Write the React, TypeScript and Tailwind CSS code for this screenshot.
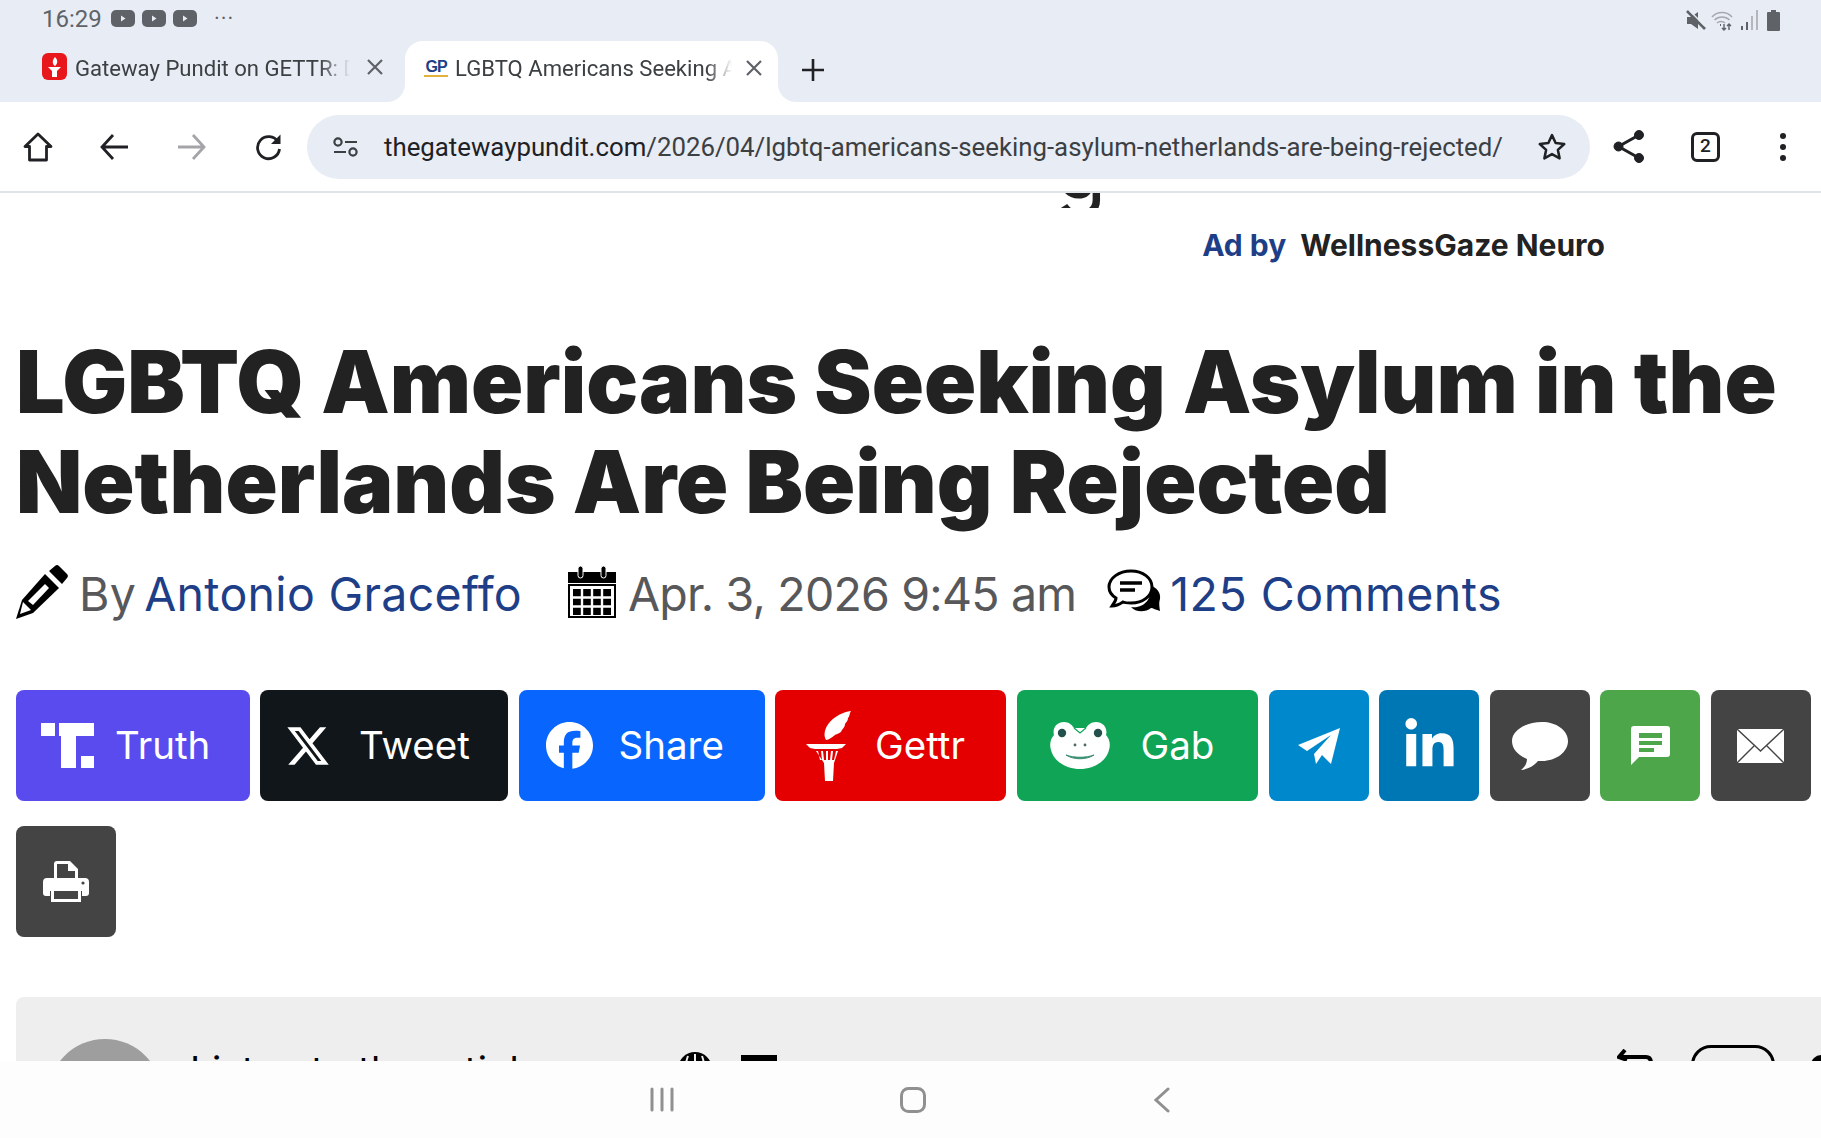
import { FaFacebook, FaLinkedinIn, FaXTwitter } from 'react-icons/fa6'

function YtIcon() {
  return (
    <svg width="24" height="17" viewBox="0 0 24 17">
      <rect width="24" height="17" rx="5" fill="#5f6368" />
      <path d="M10 5.5l4.5 3-4.5 3z" fill="#e8ecf5" />
    </svg>
  )
}

function StatusIcons() {
  return (
    <div className="flex items-center">
      <svg width="20" height="21" viewBox="0 0 20 21" fill="#5f6368">
        <path d="M1 7h4l7-5v17l-7-5H1z" />
        <path d="M1 1l18 18" stroke="#5f6368" strokeWidth="2.6" />
        <path d="M3 0l16 16" stroke="#e8ecf5" strokeWidth="1.4" />
      </svg>
      <svg width="22" height="21" viewBox="0 0 22 21" fill="none" stroke="#a5a8ad" strokeWidth="1.5" className="ml-[5px]">
        <path d="M1 7c5-6 15-6 20 0" />
        <path d="M3.5 10c4-4 11-4 15 0" />
        <path d="M6 13c2-2 6-2 8 0" />
        <path d="M9 15h1" stroke="#5f6368" strokeWidth="2" />
        <path d="M13 14v6M11 18l2 2 2-2M18 20v-6M16 16l2-2 2 2" stroke="#5f6368" strokeWidth="1.4" />
      </svg>
      <svg width="17" height="20" viewBox="0 0 17 20" className="ml-[8px]">
        <rect x="0" y="16" width="2" height="4" fill="#5f6368" />
        <rect x="5" y="12" width="2" height="8" fill="#5f6368" />
        <rect x="10" y="6" width="2" height="14" fill="#b3b6bb" />
        <rect x="15" y="0" width="2" height="20" fill="#b3b6bb" />
      </svg>
      <svg width="13" height="21" viewBox="0 0 13 21" className="ml-[9px]" fill="#5f6368">
        <path d="M4 0h5v2h3a1 1 0 0 1 1 1v17a1 1 0 0 1-1 1H1a1 1 0 0 1-1-1V3a1 1 0 0 1 1-1h3z" />
      </svg>
    </div>
  )
}

function CloseX() {
  return (
    <svg width="16" height="16" viewBox="0 0 16 16" stroke="#5f6368" strokeWidth="2.2" className="shrink-0">
      <path d="M1 1l14 14M15 1L1 15" />
    </svg>
  )
}

function TabStrip() {
  return (
    <div className="flex h-[61px] items-stretch">
      <div className="ml-[42px] mt-[12px] flex h-[27px] w-[341px] items-center">
        <svg width="25" height="27" viewBox="0 0 25 27" className="shrink-0">
          <rect width="25" height="27" rx="6" fill="#e8171c" />
          <path d="M13 4c3 3 3 6 0 9-3-2-3-6 0-9z" fill="#fff" />
          <path d="M6 14h13l-4 4v6h-5v-6z" fill="#fff" />
        </svg>
        <span className="ml-[8px] mt-[2px] w-[278px] overflow-hidden whitespace-nowrap font-[Roboto] text-[22.1px] leading-[30px] text-[#3c4043] [mask-image:linear-gradient(to_right,black_88%,transparent_99%)]">
          Gateway Pundit on GETTR: Dan
        </span>
        <span className="ml-[14px]">
          <CloseX />
        </span>
      </div>
      <div className="relative ml-[22px] flex w-[373px] items-center rounded-t-[18px] bg-white pb-[8px] pl-[19px]">
        <div className="absolute bottom-0 left-[-18px] h-[18px] w-[18px] bg-white">
          <div className="h-full w-full rounded-br-[18px] bg-[#e8ecf5]" />
        </div>
        <div className="absolute bottom-0 right-[-18px] h-[18px] w-[18px] bg-white">
          <div className="h-full w-full rounded-bl-[18px] bg-[#e8ecf5]" />
        </div>
        <span className="flex w-[24px] shrink-0 flex-col items-center border-b-2 border-[#e3b23c] font-['Liberation_Sans'] text-[16px] leading-[17px] font-bold tracking-[-1px] text-[#1e3f87]">
          GP
        </span>
        <span className="ml-[7px] w-[280px] overflow-hidden whitespace-nowrap font-[Roboto] text-[22.1px] leading-[30px] text-[#3c4043] [mask-image:linear-gradient(to_right,black_90%,transparent_99%)]">
          LGBTQ Americans Seeking Asylum
        </span>
        <span className="ml-[11px]">
          <CloseX />
        </span>
      </div>
      <svg width="22" height="22" viewBox="0 0 22 22" stroke="#202124" strokeWidth="2.6" className="ml-[24px] mt-[18px]">
        <path d="M11 0v22M0 11h22" />
      </svg>
    </div>
  )
}

function Toolbar() {
  return (
    <div className="flex h-[91px] items-center border-b-2 border-[#dfe3ea] bg-white">
      <div className="flex w-[307px] shrink-0 items-center pl-[23px]">
        <svg width="30" height="30" viewBox="0 0 30 30" fill="none" stroke="#202124" strokeWidth="2.8" strokeLinejoin="round">
          <path d="M15 2L2 14.5h4.5V28h17V14.5H28z" />
        </svg>
        <svg width="28" height="26" viewBox="0 0 28 26" fill="none" stroke="#202124" strokeWidth="2.8" className="ml-[47px]">
          <path d="M13 1L2 13l11 12M2 13h26" />
        </svg>
        <svg width="28" height="26" viewBox="0 0 28 26" fill="none" stroke="#a3a5a8" strokeWidth="2.8" className="ml-[50px]">
          <path d="M15 1l11 12-11 12M26 13H0" />
        </svg>
        <svg width="28" height="28" viewBox="0 0 28 28" fill="none" className="ml-[48px]">
          <path d="M24 9a11 11 0 1 0 1.5 7" stroke="#202124" strokeWidth="2.8" />
          <path d="M26.5 1.5V11h-9.5z" fill="#202124" />
        </svg>
      </div>
      <div className="flex h-[64px] w-[1283px] shrink-0 items-center rounded-full bg-[#e8ecf5] pl-[26px]">
        <svg width="25" height="20" viewBox="0 0 25 20" fill="none" stroke="#3c4043" strokeWidth="2.2" className="shrink-0">
          <circle cx="5" cy="5" r="3.6" />
          <path d="M12 5h12M1 15h12" />
          <circle cx="20" cy="15" r="3.6" />
        </svg>
        <span className="ml-[26px] mt-[2px] font-[Roboto] text-[25.8px] whitespace-nowrap text-[#3c4043]">
          <span className="text-[#202124]">thegatewaypundit.com</span>/2026/04/lgbtq-americans-seeking-asylum-netherlands-are-being-rejected/
        </span>
        <svg width="30" height="30" viewBox="0 0 24 24" fill="none" stroke="#202124" strokeWidth="2" strokeLinejoin="round" className="ml-[34px] shrink-0">
          <path d="M12 2.5l2.9 6.3 6.9.8-5.1 4.7 1.4 6.8-6.1-3.4-6.1 3.4 1.4-6.8-5.1-4.7 6.9-.8z" />
        </svg>
      </div>
      <svg width="32" height="33" viewBox="0 0 32 33" fill="#202124" stroke="#202124" className="ml-[23px] shrink-0">
        <circle cx="26" cy="5" r="4.5" />
        <circle cx="5.5" cy="16.5" r="4.5" />
        <circle cx="26" cy="28" r="4.5" />
        <path d="M26 5L5.5 16.5 26 28" fill="none" strokeWidth="3" />
      </svg>
      <span className="ml-[46px] flex h-[30px] w-[29px] shrink-0 items-center justify-center rounded-[6px] border-[3px] border-[#202124] font-[Roboto] text-[19px] font-medium text-[#202124]">
        2
      </span>
      <span className="ml-[60px] flex shrink-0 flex-col gap-[5px]">
        <span className="h-[6px] w-[6px] rounded-full bg-[#202124]" />
        <span className="h-[6px] w-[6px] rounded-full bg-[#202124]" />
        <span className="h-[6px] w-[6px] rounded-full bg-[#202124]" />
      </span>
    </div>
  )
}

function MetaRow() {
  return (
    <div className="mt-[35px] flex h-[56px] items-center whitespace-nowrap font-[Inter] text-[46.5px] tracking-[0.3px] text-[#58585a]">
      <svg width="54" height="54" viewBox="0 0 54 54" className="-ml-[2px] -mt-[6px] shrink-0">
        <path d="M41 1a3 3 0 0 1 4 0l8 8a3 3 0 0 1 0 4l-5 6-13-13z" fill="#000" />
        <path d="M31 9l14 14-26 25-17 6 6-19z" fill="#000" />
        <path d="M31 19l4 4-16 17-5-4z" fill="#fff" />
        <path d="M9 37l8 8-11 4z" fill="#fff" />
      </svg>
      <span className="ml-[11px]">By</span>
      <span className="ml-[8px] text-[#1e3f87]">Antonio Graceffo</span>
      <svg width="48" height="52" viewBox="0 0 48 52" className="-mt-[6px] ml-[46px] shrink-0">
        <rect x="0" y="6" width="48" height="11" fill="#000" />
        <rect x="10" y="0" width="5" height="12" rx="2.5" fill="#000" stroke="#fff" strokeWidth="1" />
        <rect x="33" y="0" width="5" height="12" rx="2.5" fill="#000" stroke="#fff" strokeWidth="1" />
        <rect x="1" y="19" width="46" height="32" fill="#fff" stroke="#000" strokeWidth="2" />
        <path d="M5 23h38v26H5z" fill="#000" />
        <path d="M14 23v26M24 23v26M34 23v26M5 31.5h38M5 40.5h38" stroke="#fff" strokeWidth="2.4" />
      </svg>
      <span className="ml-[12px] tracking-[-0.8px]">Apr. 3, 2026 9:45 am</span>
      <svg width="54" height="46" viewBox="0 0 54 46" className="-mt-[6px] ml-[31px] shrink-0">
        <path d="M42 16c8 2 12 8 11 14-1 3-1 6 0 12-4-1-7-3-9-3-6 5-16 4-20-1 12 2 23-8 18-22z" fill="#000" />
        <path d="M24 2c12 0 21 7 21 16s-9 16-21 16c-3 0-6 0-8-1-3 2-6 4-11 4 2-3 4-5 4-8-5-3-7-7-7-11C2 9 12 2 24 2z" fill="#fff" stroke="#000" strokeWidth="3" />
        <path d="M13 14h22M13 21h15" stroke="#000" strokeWidth="3.4" />
      </svg>
      <span className="ml-[9px] tracking-[0.5px] text-[#1e3f87]">125 Comments</span>
    </div>
  )
}

function GettrIcon() {
  return (
    <svg width="46" height="70" viewBox="0 0 46 70" fill="#fff" className="shrink-0">
      <path d="M45 0c-2 3-1 5-3 7 0 3-2 4-3 6 0 3-2 4-3 6-1 3-5 4-7 5-3 2-6 5-9 5-3-5-1-12 3-17C29 5 37 1 45 0z" />
      <path d="M0 33h40l-4 4-5 1H9l-5-1z" />
      <path d="M10 40h2l2 9h2l-1-9h2l1 9h2v-9h2v9h2l1-9h2l-1 9h2l2-9h2l-4 12-1 18h-8l-1-18z" />
    </svg>
  )
}

function GabIcon() {
  return (
    <svg width="62" height="47" viewBox="0 0 62 47" className="shrink-0">
      <path d="M2 28C0 22 2 16 5 13 3 6 8 0 15 0c5 0 8 3 10 6h12c2-3 5-6 10-6 7 0 12 6 10 13 3 3 5 9 3 15-3 12-16 19-29 19S5 40 2 28z" fill="#fff" />
      <path d="M25 6l6 5 6-5" fill="none" stroke="#0fa456" strokeWidth="1.2" />
      <circle cx="13" cy="11" r="4.2" fill="#23504a" />
      <circle cx="49" cy="11" r="4.2" fill="#23504a" />
      <circle cx="26" cy="23" r="1.4" fill="#4a6a62" />
      <circle cx="36" cy="23" r="1.4" fill="#4a6a62" />
      <path d="M17 33c8 5 20 5 28 0-8 3-20 3-28 0z" fill="#3b8f71" stroke="#3b8f71" />
    </svg>
  )
}

const shareButtons = [
  { label: 'Truth', width: 'w-[233.5px]', bg: 'bg-[#5a4bee]', pad: 'pl-[25px]', gap: 'ml-[21px]', icon: (
    <svg width="53" height="45" viewBox="0 0 53 45" fill="#fff" className="shrink-0">
      <rect width="14" height="13" />
      <rect x="18" width="35" height="13" />
      <rect x="20" width="15" height="45" />
      <rect x="40" y="33" width="13" height="12" />
    </svg>
  ) },
  { label: 'Tweet', width: 'w-[248px]', bg: 'bg-[#101619]', pad: 'pl-[25px]', gap: 'ml-[28px]', icon: <FaXTwitter className="shrink-0 text-[46px] text-white" /> },
  { label: 'Share', width: 'w-[246px]', bg: 'bg-[#0866ff]', pad: 'pl-[27px]', gap: 'ml-[26px]', icon: <FaFacebook className="shrink-0 text-[47px] text-white" /> },
  { label: 'Gettr', width: 'w-[231px]', bg: 'bg-[#e40000]', pad: 'pl-[31px]', gap: 'ml-[23px]', icon: <GettrIcon /> },
  { label: 'Gab', width: 'w-[241.5px]', bg: 'bg-[#0fa456]', pad: 'pl-[32px]', gap: 'ml-[30px]', icon: <GabIcon /> },
]

const iconButtons = [
  { key: 'telegram', bg: 'bg-[#0088cc]', icon: (
    <svg width="42" height="36" viewBox="0 0 42 36" fill="#fff">
      <path d="M42 0L0 17l9 6 24-16-17 19 2 10 6-9 9 9z" />
    </svg>
  ) },
  { key: 'linkedin', bg: 'bg-[#0077b5]', icon: <FaLinkedinIn className="text-[55px] text-white" /> },
  { key: 'comment', bg: 'bg-[#444444]', icon: (
    <svg width="56" height="48" viewBox="0 0 56 48" fill="#fff">
      <path d="M30 0c14 0 26 8 26 19S44 39 30 39h-4c-4 5-10 8-17 9 4-3 6-7 6-11C6 33 0 27 0 19 0 8 14 0 30 0z" />
    </svg>
  ) },
  { key: 'sms', bg: 'bg-[#4ea64a]', icon: (
    <svg width="39" height="39" viewBox="0 0 39 39">
      <path d="M3 0h33a3 3 0 0 1 3 3v25a3 3 0 0 1-3 3H8l-8 8V3a3 3 0 0 1 3-3z" fill="#fff" />
      <path d="M8 7h23v5H8zM8 15h23v4H8zM8 22h15v4H8z" fill="#4ea64a" />
    </svg>
  ) },
  { key: 'email', bg: 'bg-[#444444]', icon: (
    <svg width="47" height="34" viewBox="0 0 47 34">
      <rect width="47" height="34" fill="#fff" />
      <path d="M0 0l23.5 22L47 0M0 34l17-17M47 34L30 17" fill="none" stroke="#444" strokeWidth="1.4" />
    </svg>
  ) },
  { key: 'print', bg: 'bg-[#444444]', icon: (
    <svg width="46" height="41" viewBox="0 0 46 41" fill="none">
      <path d="M11 19V3a3 3 0 0 1 3-3h13l8 8v11z" fill="#fff" />
      <path d="M14 3v15h18V10h-7V3z" fill="#444" />
      <path d="M4 17h38a4 4 0 0 1 4 4v11a3 3 0 0 1-3 3h-4v-5H7v5H3a3 3 0 0 1-3-3V21a4 4 0 0 1 4-4z" fill="#fff" />
      <circle cx="40" cy="22" r="1.6" fill="#444" />
      <path d="M8 28h30v13H8z" fill="#fff" />
      <path d="M11 30h24v8H11z" fill="#444" />
    </svg>
  ) },
]

function ShareRow() {
  return (
    <div className="mt-[67px] flex flex-wrap gap-x-[10.5px] gap-y-[25px]">
      {shareButtons.map((b) => (
        <div key={b.label} className={`flex h-[111px] items-center rounded-[8px] font-[Inter] text-[38.5px] text-white ${b.width} ${b.bg} ${b.pad}`}>
          {b.icon}
          <span className={b.gap}>{b.label}</span>
        </div>
      ))}
      {iconButtons.map((b) => (
        <div key={b.key} className={`flex h-[111px] w-[100px] items-center justify-center rounded-[8px] ${b.bg}`}>
          {b.icon}
        </div>
      ))}
    </div>
  )
}

function ListenPanel() {
  return (
    <div className="mt-[60px] flex h-[160px] items-start rounded-tl-[8px] bg-[#eeeeee] font-[Inter] whitespace-nowrap">
      <div className="ml-[32px] mt-[42px] h-[114px] w-[114px] shrink-0 rounded-full bg-[#9e9e9e]" />
      <span className="ml-[28px] mt-[50px] text-[38px] leading-[46px] tracking-[0.45px] text-black">Listen to the article</span>
      <svg width="34" height="34" viewBox="0 0 34 34" fill="#000" className="ml-[136px] mt-[55px] shrink-0">
        <circle cx="17" cy="17" r="17" />
        <path d="M17 2v30M10 4c-3 8-3 18 0 26M24 4c3 8 3 18 0 26" stroke="#eee" strokeWidth="2" fill="none" />
      </svg>
      <div className="ml-[29px] mt-[58px] h-[20px] w-[36px] shrink-0 bg-black" />
      <div className="ml-auto mt-[52px] flex items-start">
        <svg width="36" height="24" viewBox="0 0 36 24" fill="none" stroke="#000" strokeWidth="4" className="mr-[38px] shrink-0">
          <path d="M8 1L2 8l8 3M3 8h26c4 0 5 3 5 6v10" />
        </svg>
        <div className="-mt-[4px] mr-[36px] flex h-[60px] w-[84px] shrink-0 justify-center rounded-[20px] border-[3px] border-black pt-[5px] text-[24px] font-medium text-black">
          1.0
        </div>
        <div className="mt-[6px] h-[24px] w-[10px] shrink-0 rounded-tl-full bg-black" />
      </div>
    </div>
  )
}

function Article() {
  return (
    <div className="min-h-0 flex-1 overflow-hidden bg-white pl-[16px]">
      <div className="h-[15px] overflow-hidden pl-[1039px]">
        <div className="-mt-[66px] font-[Inter] text-[84px] leading-[84px] text-[#222222]">g</div>
      </div>
      <div className="mt-[20px] flex justify-end pr-[216px] font-[Inter] text-[30px] leading-[34px] font-bold whitespace-nowrap">
        <span className="text-[#1e3f87]">Ad by</span>
        <span className="ml-[14px] text-[#222222]">WellnessGaze Neuro</span>
      </div>
      <h1 className="mt-[70px] font-[Inter] text-[86.2px] leading-[100px] font-black whitespace-nowrap text-[#222222]">
        LGBTQ Americans Seeking Asylum in the
        <br />
        Netherlands Are Being Rejected
      </h1>
      <MetaRow />
      <ShareRow />
      <ListenPanel />
    </div>
  )
}

function NavBar() {
  return (
    <div className="flex h-[77px] shrink-0 items-start bg-[#fdfdfd] pl-[650px] pt-[26px]">
      <svg width="24" height="25" viewBox="0 0 24 25" stroke="#909090" strokeWidth="3" strokeLinecap="round">
        <path d="M2 2v21M12 2v21M22 2v21" />
      </svg>
      <svg width="26" height="26" viewBox="0 0 26 26" fill="none" stroke="#909090" strokeWidth="3" className="ml-[226px]">
        <rect x="1.5" y="1.5" width="23" height="23" rx="7" />
      </svg>
      <svg width="16" height="26" viewBox="0 0 16 26" fill="none" stroke="#909090" strokeWidth="3" strokeLinecap="round" className="ml-[228px]">
        <path d="M14 2L2 13l12 11" />
      </svg>
    </div>
  )
}

export default function App() {
  return (
    <div className="flex h-[1138px] w-[1821px] flex-col overflow-hidden bg-white">
      <div className="shrink-0 bg-[#e8ecf5]">
        <div className="flex h-[41px] items-center pb-[4px] pl-[42px] pr-[41px]">
          <span className="w-[69px] font-[Roboto] text-[24px] text-[#5f6368]">16:29</span>
          <div className="flex gap-[7px]">
            <YtIcon />
            <YtIcon />
            <YtIcon />
          </div>
          <span className="ml-[17px] font-[Roboto] text-[22px] tracking-[1px] text-[#5f6368]">···</span>
          <div className="ml-auto mt-[3px]">
            <StatusIcons />
          </div>
        </div>
        <TabStrip />
      </div>
      <Toolbar />
      <Article />
      <NavBar />
    </div>
  )
}
